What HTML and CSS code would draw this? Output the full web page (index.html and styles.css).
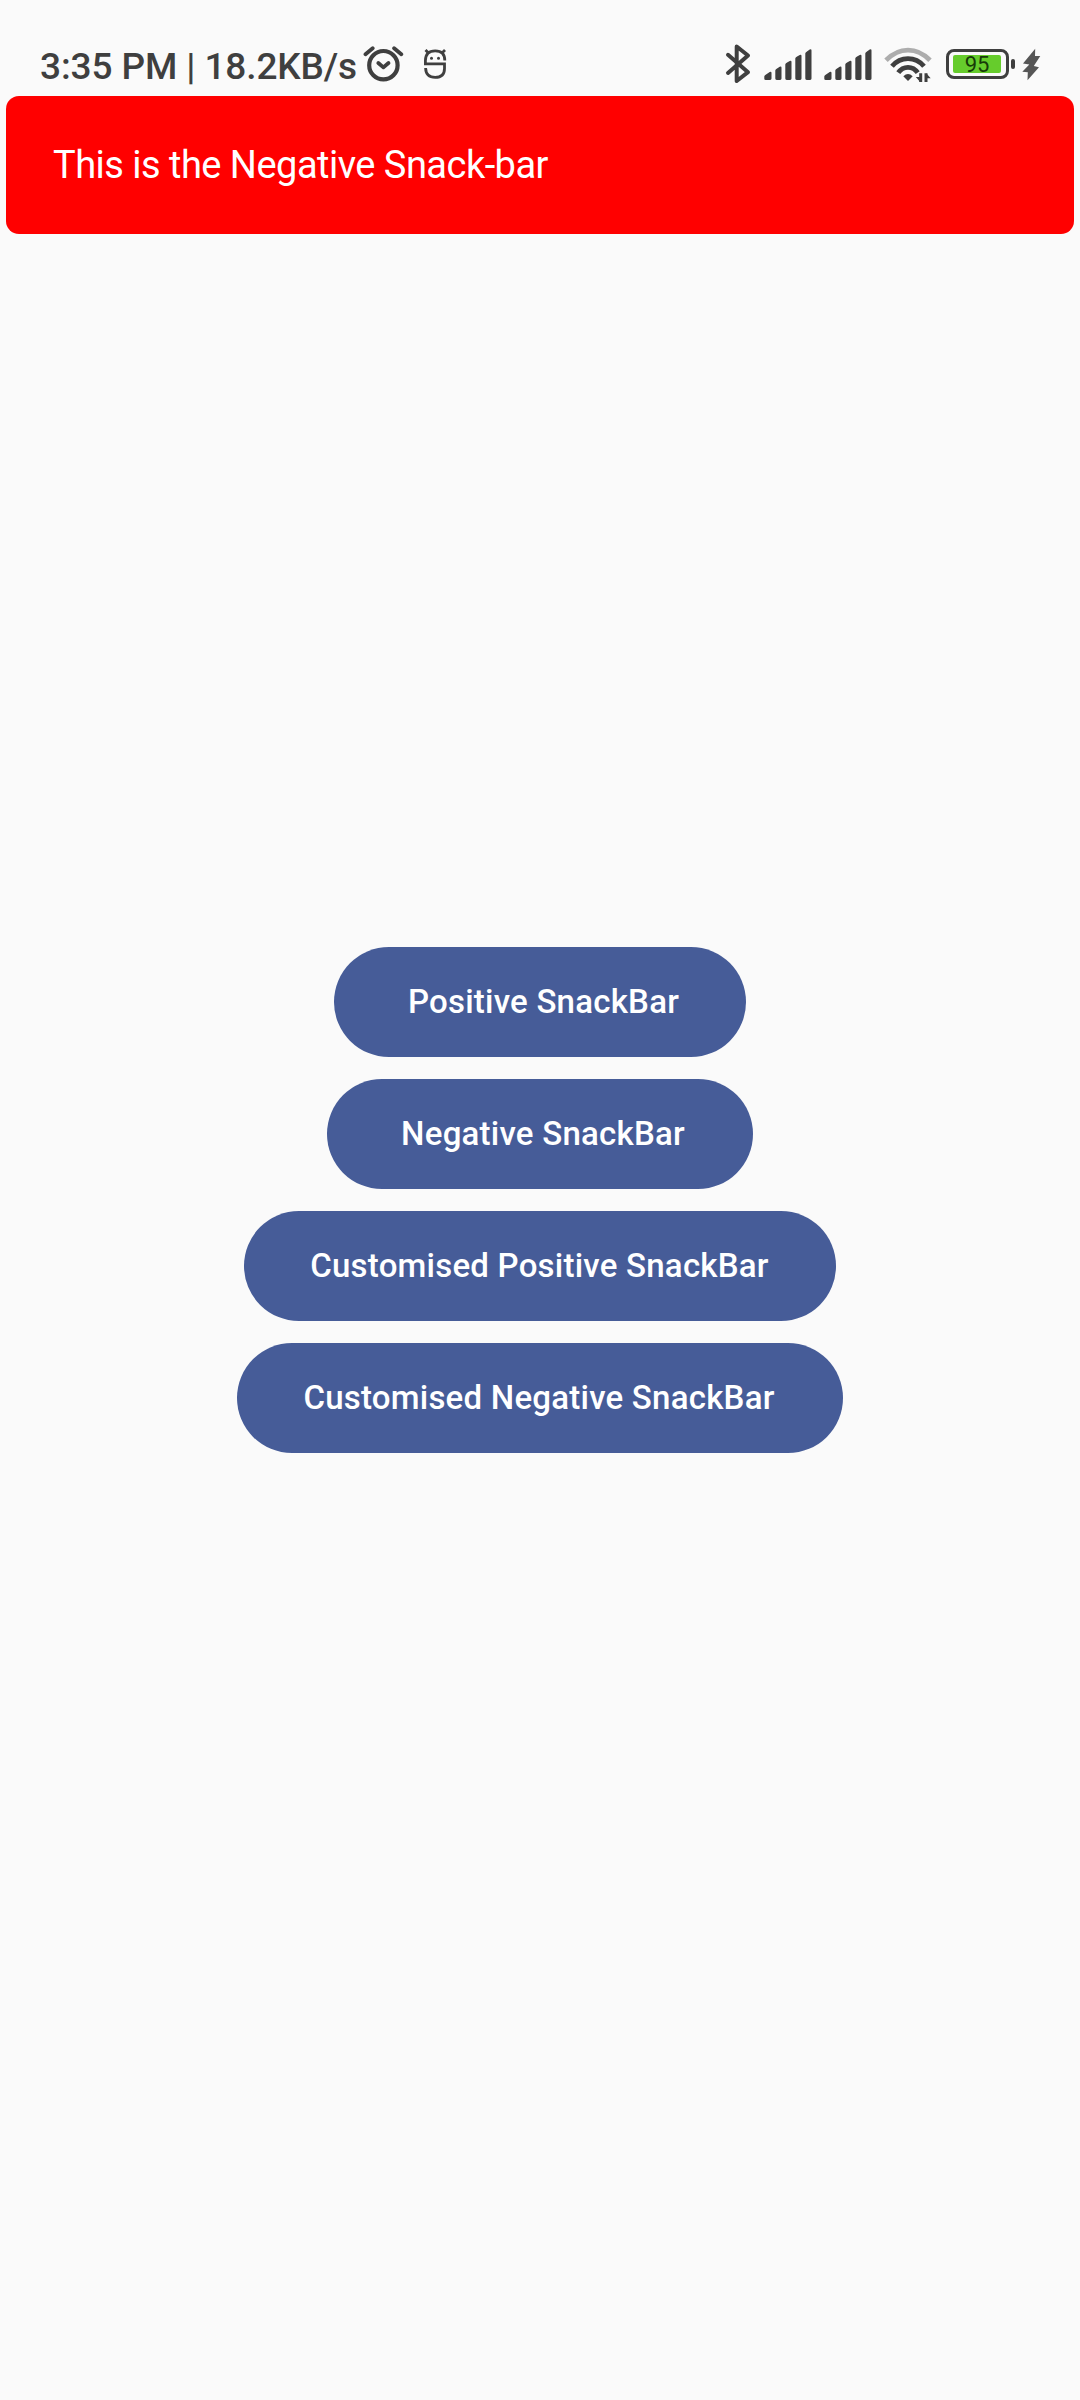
FILE: index.html
```html
<!DOCTYPE html>
<html lang="en">
<head>
<meta charset="utf-8">
<title>SnackBar</title>
<link rel="stylesheet" href="styles.css">
</head>
<body>
<header class="status">
  <span class="status-text">3:35 PM | 18.2KB/s</span>
  <svg class="alarm" width="42" height="40" viewBox="363 44 42 40" fill="none" stroke="#3f3f3f" stroke-linecap="round" stroke-linejoin="round">
    <circle cx="383.4" cy="65.2" r="14.2" stroke-width="4.2"/>
    <path d="M365.5 54.2l7.2-6M401.3 54.2l-7.2-6" stroke-width="3.8"/>
    <path d="M378.3 63l5.1 4.4 5.1-4.4" stroke-width="3.8"/>
  </svg>
  <svg class="droid" width="24" height="32" viewBox="423 48 24 32" fill="none" stroke="#3f3f3f" stroke-width="2.8">
    <path d="M444.8 60.5Q444.8 50.8 435.2 50.8T425.4 60.5V63.8H444.5V68.5Q444.5 77.4 435.2 77.4T425.6 68"/>
    <path d="M425.5 50l3 3M445 50l-3 3"/>
    <circle cx="431.5" cy="58.2" r="1.5" fill="#3f3f3f" stroke="none"/>
    <circle cx="438.5" cy="58.2" r="1.5" fill="#3f3f3f" stroke="none"/>
  </svg>
  <div class="status-icons">
    <svg width="26" height="40" viewBox="725 44 26 40" fill="none" stroke="#3f3f3f" stroke-width="4" stroke-linecap="round" stroke-linejoin="round">
      <path d="M728 54.8l20 17.4-11.3 8.8V46.5l11.3 9L728 73"/>
    </svg>
    <svg class="signal" width="48" height="32" viewBox="764 49 48 32" fill="#3f3f3f">
      <path d="M764.3 79.8v-3.2q0-1 1-1.6l4.4-2.9q1.8-.8 1.8 1v5.5q0 1.4-1.4 1.4h-4.4q-1.4 0-1.4-1.2zM775.3 78.6v-8q0-1 1-1.6l3.4-2.2q1.8-.8 1.8 1v10.8q0 1.4-1.4 1.4h-3.4q-1.4 0-1.4-1.4zM785.3 78.6v-14q0-1 1-1.6l3.4-2q1.8-.8 1.8 1v16.6q0 1.4-1.4 1.4h-3.4q-1.4 0-1.4-1.4zM795.3 78.6v-20q0-1 1-1.6l3.4-2q1.8-.8 1.8 1v22.6q0 1.4-1.4 1.4h-3.4q-1.4 0-1.4-1.4zM805.3 78.6v-25q0-1 1-1.6l3.4-2.5q1.8-.8 1.8 1v28.1q0 1.4-1.4 1.4h-3.4q-1.4 0-1.4-1.4z"/>
    </svg>
    <svg class="signal" width="48" height="32" viewBox="764 49 48 32" fill="#3f3f3f">
      <path d="M764.3 79.8v-3.2q0-1 1-1.6l4.4-2.9q1.8-.8 1.8 1v5.5q0 1.4-1.4 1.4h-4.4q-1.4 0-1.4-1.2zM775.3 78.6v-8q0-1 1-1.6l3.4-2.2q1.8-.8 1.8 1v10.8q0 1.4-1.4 1.4h-3.4q-1.4 0-1.4-1.4zM785.3 78.6v-14q0-1 1-1.6l3.4-2q1.8-.8 1.8 1v16.6q0 1.4-1.4 1.4h-3.4q-1.4 0-1.4-1.4zM795.3 78.6v-20q0-1 1-1.6l3.4-2q1.8-.8 1.8 1v22.6q0 1.4-1.4 1.4h-3.4q-1.4 0-1.4-1.4zM805.3 78.6v-25q0-1 1-1.6l3.4-2.5q1.8-.8 1.8 1v28.1q0 1.4-1.4 1.4h-3.4q-1.4 0-1.4-1.4z"/>
    </svg>
    <svg class="wifi" width="48" height="36" viewBox="884 47 48 36" fill="none" stroke="#3f3f3f" stroke-width="4.8">
      <path d="M886 60.3Q896 50.2 908 50.2T930 60.3" stroke="#adadad"/>
      <path d="M892 66.2Q898.5 58.6 908 58.6T924 66.2"/>
      <path d="M898.3 72.7Q902 67.3 908 67.3T917.7 72.7"/>
      <path d="M903.3 76.3q4.7-4.4 9.4 0l-4.7 4.8z" fill="#3f3f3f" stroke="none"/>
      <path d="M920.7 73.3V82M926 73.3V82" stroke-width="3"/>
      <path d="M915.8 77h4.400v5zM926.3 73.3v5h4.400z" fill="#3f3f3f" stroke="none"/>
    </svg>
    <div class="battery"><div class="charge">95</div></div>
    <div class="battery-cap"></div>
    <svg class="bolt" width="20" height="34" viewBox="1021 48 20 34" fill="#565656">
      <path d="M1035.2 48.7L1023 63.5 1029.300 64.500 1022.300 71.800 1027.800 72.300 1027.500 80.200 1039 67.300 1033.800 66 1040.300 55.900 1035 55.900z"/>
    </svg>
  </div>
</header>
<div class="snackbar"><span class="snackbar-text">This is the Negative Snack-bar</span></div>
<main class="buttons">
  <button class="btn positive">Positive SnackBar</button>
  <button class="btn negative">Negative SnackBar</button>
  <button class="btn custom-positive">Customised Positive SnackBar</button>
  <button class="btn custom-negative">Customised Negative SnackBar</button>
</main>
</body>
</html>
```
FILE: styles.css
```css
* { box-sizing: border-box; }
body {
  margin: 0;
  height: 2400px;
  background: #fafafa;
  font-family: Roboto, sans-serif;
  overflow: hidden;
}
svg { display: block; flex: none; }
.status {
  height: 96px;
  padding: 44px 39px 0 40px;
  display: flex;
  align-items: flex-start;
  color: #3f3f3f;
}
.status-text {
  width: 323px;
  font-size: 37px;
  line-height: 45px;
  font-weight: 500;
  letter-spacing: -0.12px;
  white-space: nowrap;
}
.droid { margin: 4px 0 0 18px; }
.status-icons {
  margin-left: auto;
  display: flex;
  align-items: flex-start;
}
.signal { margin: 5px 0 0 13px; }
.signal + .signal { margin-left: 12px; }
.wifi { margin: 3px 0 0 12px; }
.battery {
  width: 63px;
  height: 30px;
  margin: 5px 0 0 14px;
  padding: 3px 5px 3px 4px;
  border: 3px solid #3f3f3f;
  border-radius: 8px;
}
.charge {
  width: 48px;
  height: 18px;
  border-radius: 2px;
  background: #66cc2c;
  color: #173b08;
  font-size: 22px;
  line-height: 20px;
  text-align: center;
}
.battery-cap {
  width: 4px;
  height: 10px;
  margin: 15px 6px 0 2px;
  border-radius: 2px;
  background: #3f3f3f;
}
.bolt { margin-top: 4px; }
.snackbar {
  height: 138px;
  margin: 0 6px;
  padding: 0 47px;
  display: flex;
  align-items: center;
  border-radius: 13px;
  background: #ff0000;
  color: #fff;
  font-size: 38px;
  letter-spacing: -0.52px;
}
.buttons {
  padding-top: 713px;
  display: flex;
  flex-direction: column;
  align-items: center;
  gap: 22px;
}
.btn {
  height: 110px;
  padding: 0 0 2px;
  border: 0;
  border-radius: 55px;
  background: #465c98;
  color: #fff;
  font: 500 33px Roboto, sans-serif;
  letter-spacing: 0.23px;
  white-space: nowrap;
}
.positive { width: 412px; padding-left: 7px; }
.negative { width: 426px; padding-left: 6px; }
.custom-positive { width: 592px; padding-right: 1px; }
.custom-negative { width: 606px; padding-right: 2px; }
```
